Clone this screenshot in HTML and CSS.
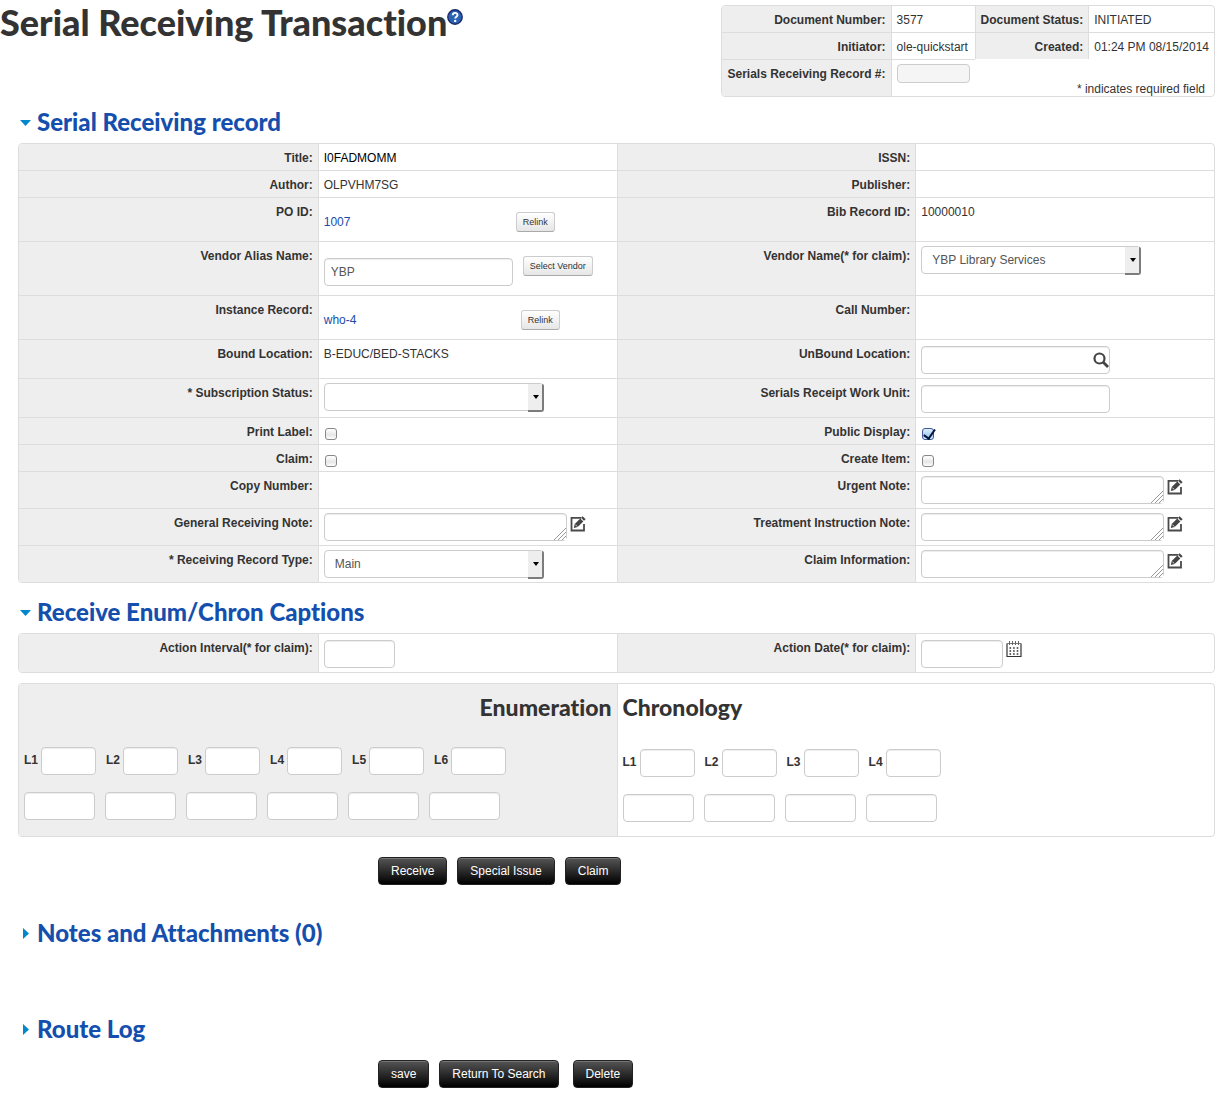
FILE: index.html
```html
<!DOCTYPE html>
<html lang="en">

<head>
    <meta charset="UTF-8">
    <meta name="viewport" content="width=device-width, initial-scale=1.0">
    <title>Serial Receiving Transaction</title>
    <link rel="stylesheet" href="styles.css">
</head>

<body>
    <!-- shared icons -->
    <svg class="icon-defs" aria-hidden="true">
        <symbol id="icon-edit" viewBox="0 0 16 16">
            <path d="M11 1.800H1.500v12.700H14V8" fill="none" stroke="#4a4a4a" stroke-width="1.800"/>
            <path d="M3.800 12l.9-3.900 5.600-5.600 3 3-5.600 5.600z" fill="#444"/>
            <path d="M11 1.800l1.600-1.600 3 3-1.600 1.600z" fill="#444"/>
            <path d="M5.300 8.600l2 2" stroke="#fff" stroke-width="0.800"/>
        </symbol>
        <symbol id="icon-down" viewBox="0 0 11 11">
            <path d="M0 3h11l-5.500 6z" fill="#08c"/>
        </symbol>
        <symbol id="icon-right" viewBox="0 0 11 11">
            <path d="M3 0v11l6-5.500z" fill="#08c"/>
        </symbol>
    </svg>

    <header class="page-header">
        <h1 class="page-title">Serial Receiving Transaction<a class="help" href="#" aria-label="Help"><svg width="16" height="16" viewBox="0 0 16 16">
            <circle cx="8" cy="8" r="7.200" fill="#2a62b4" stroke="#1c2a6b" stroke-width="1.400"/>
            <path d="M5.700 6.300c0-3.200 4.800-3.100 4.800-.3 0 1.700-2.300 1.700-2.300 3.500" fill="none" stroke="#fff" stroke-width="1.900"/>
            <circle cx="8.200" cy="11.900" r="1.200" fill="#fff"/>
        </svg></a></h1>
        <table class="grid doc-info">
            <tr>
                <th>Document Number:</th>
                <td>3577</td>
                <th>Document Status:</th>
                <td>INITIATED</td>
            </tr>
            <tr>
                <th>Initiator:</th>
                <td>ole-quickstart</td>
                <th>Created:</th>
                <td>01:24 PM 08/15/2014</td>
            </tr>
            <tr>
                <th><label for="record-no">Serials Receiving Record #:</label></th>
                <td><input class="record-no" id="record-no" type="text" disabled></td>
                <td class="required-note" colspan="2">* indicates required field</td>
            </tr>
        </table>
    </header>

    <main class="content">
        <section class="section">
            <h2 class="section-title"><a href="#"><svg width="11" height="11"><use href="#icon-down"/></svg>Serial Receiving record</a></h2>
            <table class="grid form-grid">
                <tr>
                    <th>Title:</th>
                    <td class="record-title">I0FADMOMM</td>
                    <th>ISSN:</th>
                    <td></td>
                </tr>
                <tr>
                    <th>Author:</th>
                    <td>OLPVHM7SG</td>
                    <th>Publisher:</th>
                    <td></td>
                </tr>
                <tr>
                    <th>PO ID:</th>
                    <td>
                        <div class="action-row">
                            <a class="po-link" href="#">1007</a>
                            <button class="btn-small" type="button">Relink</button>
                        </div>
                    </td>
                    <th>Bib Record ID:</th>
                    <td>10000010</td>
                </tr>
                <tr>
                    <th><label for="vendor-alias">Vendor Alias Name:</label></th>
                    <td>
                        <div class="action-row vendor-row">
                            <input class="text-box medium" id="vendor-alias" type="text" value="YBP">
                            <button class="btn-small" type="button">Select Vendor</button>
                        </div>
                    </td>
                    <th><label for="vendor-name">Vendor Name(* for claim):</label></th>
                    <td><span class="select-box"><select id="vendor-name"><option>YBP Library Services</option></select></span></td>
                </tr>
                <tr>
                    <th>Instance Record:</th>
                    <td>
                        <div class="action-row">
                            <a class="instance-link" href="#">who-4</a>
                            <button class="btn-small" type="button">Relink</button>
                        </div>
                    </td>
                    <th>Call Number:</th>
                    <td></td>
                </tr>
                <tr>
                    <th>Bound Location:</th>
                    <td>B-EDUC/BED-STACKS</td>
                    <th><label for="unbound">UnBound Location:</label></th>
                    <td>
                        <div class="search-box">
                            <input class="text-box medium" id="unbound" type="text">
                            <button class="search-btn icon-btn" type="button" aria-label="Search"><svg width="16" height="16" viewBox="0 0 16 16">
                                <circle cx="6.500" cy="6.500" r="5" fill="none" stroke="#444" stroke-width="2.200"/>
                                <path d="M10 10l5 5" stroke="#444" stroke-width="2.800"/>
                            </svg></button>
                        </div>
                    </td>
                </tr>
                <tr>
                    <th><label for="status">* Subscription Status:</label></th>
                    <td><span class="select-box"><select id="status"><option></option></select></span></td>
                    <th><label for="work-unit">Serials Receipt Work Unit:</label></th>
                    <td><input class="text-box medium" id="work-unit" type="text"></td>
                </tr>
                <tr>
                    <th><label for="print-label">Print Label:</label></th>
                    <td><input class="check" id="print-label" type="checkbox"></td>
                    <th><label for="public-display">Public Display:</label></th>
                    <td><input class="check" id="public-display" type="checkbox" checked></td>
                </tr>
                <tr>
                    <th><label for="claim">Claim:</label></th>
                    <td><input class="check" id="claim" type="checkbox"></td>
                    <th><label for="create-item">Create Item:</label></th>
                    <td><input class="check" id="create-item" type="checkbox"></td>
                </tr>
                <tr>
                    <th>Copy Number:</th>
                    <td></td>
                    <th><label for="urgent-note">Urgent Note:</label></th>
                    <td>
                        <div class="note-row">
                            <textarea id="urgent-note"></textarea>
                            <button class="icon-btn" type="button" aria-label="Edit urgent note"><svg width="16" height="16"><use href="#icon-edit"/></svg></button>
                        </div>
                    </td>
                </tr>
                <tr>
                    <th><label for="general-note">General Receiving Note:</label></th>
                    <td>
                        <div class="note-row">
                            <textarea id="general-note"></textarea>
                            <button class="icon-btn" type="button" aria-label="Edit general receiving note"><svg width="16" height="16"><use href="#icon-edit"/></svg></button>
                        </div>
                    </td>
                    <th><label for="treatment-note">Treatment Instruction Note:</label></th>
                    <td>
                        <div class="note-row">
                            <textarea id="treatment-note"></textarea>
                            <button class="icon-btn" type="button" aria-label="Edit treatment note"><svg width="16" height="16"><use href="#icon-edit"/></svg></button>
                        </div>
                    </td>
                </tr>
                <tr>
                    <th><label for="record-type">* Receiving Record Type:</label></th>
                    <td><span class="select-box"><select id="record-type"><option>Main</option></select></span></td>
                    <th><label for="claim-info">Claim Information:</label></th>
                    <td>
                        <div class="note-row">
                            <textarea id="claim-info"></textarea>
                            <button class="icon-btn" type="button" aria-label="Edit claim information"><svg width="16" height="16"><use href="#icon-edit"/></svg></button>
                        </div>
                    </td>
                </tr>
            </table>
        </section>

        <section class="section">
            <h2 class="section-title"><a href="#"><svg width="11" height="11"><use href="#icon-down"/></svg>Receive Enum/Chron Captions</a></h2>
            <table class="grid form-grid">
                <tr>
                    <th><label for="interval">Action Interval(* for claim):</label></th>
                    <td><input class="text-box small" id="interval" type="text"></td>
                    <th><label for="action-date">Action Date(* for claim):</label></th>
                    <td>
                        <div class="note-row">
                            <input class="text-box date" id="action-date" type="text">
                            <button class="icon-btn" type="button" aria-label="Pick a date"><svg width="16" height="16" viewBox="0 0 16 16">
                                <path d="M1 2.500V15.500H15V2.500" fill="none" stroke="#333" stroke-width="1.200"/>
                                <path d="M1 2.500h14" stroke="#777" stroke-width="1"/>
                                <path d="M3.500 0v4M6.500 0v4M9.500 0v4M12.500 0v4" stroke="#666" stroke-width="1"/>
                                <path d="M3.500 7h10M3.500 10h10M3.500 13h10" stroke="#333" stroke-width="1.600" stroke-dasharray="1.600 2"/>
                            </svg></button>
                        </div>
                    </td>
                </tr>
            </table>

            <div class="captions">
                <div class="enumeration">
                    <h3>Enumeration</h3>
                    <div class="levels">
                        <label>L1<input class="text-box level" type="text"></label>
                        <label>L2<input class="text-box level" type="text"></label>
                        <label>L3<input class="text-box level" type="text"></label>
                        <label>L4<input class="text-box level" type="text"></label>
                        <label>L5<input class="text-box level" type="text"></label>
                        <label>L6<input class="text-box level" type="text"></label>
                    </div>
                    <div class="levels">
                        <input class="text-box small" type="text" aria-label="L1 value">
                        <input class="text-box small" type="text" aria-label="L2 value">
                        <input class="text-box small" type="text" aria-label="L3 value">
                        <input class="text-box small" type="text" aria-label="L4 value">
                        <input class="text-box small" type="text" aria-label="L5 value">
                        <input class="text-box small" type="text" aria-label="L6 value">
                    </div>
                </div>
                <div class="chronology">
                    <h3>Chronology</h3>
                    <div class="levels">
                        <label>L1<input class="text-box level" type="text"></label>
                        <label>L2<input class="text-box level" type="text"></label>
                        <label>L3<input class="text-box level" type="text"></label>
                        <label>L4<input class="text-box level" type="text"></label>
                    </div>
                    <div class="levels">
                        <input class="text-box small" type="text" aria-label="L1 value">
                        <input class="text-box small" type="text" aria-label="L2 value">
                        <input class="text-box small" type="text" aria-label="L3 value">
                        <input class="text-box small" type="text" aria-label="L4 value">
                    </div>
                </div>
            </div>

            <div class="buttons">
                <button class="btn" type="button">Receive</button>
                <button class="btn" type="button">Special Issue</button>
                <button class="btn" type="button">Claim</button>
            </div>
        </section>

        <section class="section closed">
            <h2 class="section-title"><a href="#"><svg width="11" height="11"><use href="#icon-right"/></svg>Notes and Attachments (0)</a></h2>
        </section>

        <section class="section closed">
            <h2 class="section-title"><a href="#"><svg width="11" height="11"><use href="#icon-right"/></svg>Route Log</a></h2>
        </section>

        <div class="buttons">
            <button class="btn" type="button">save</button>
            <button class="btn" type="button">Return To Search</button>
            <button class="btn btn-delete" type="button">Delete</button>
        </div>
    </main>
</body>

</html>
```
FILE: styles.css
```css
* {
    box-sizing: border-box;
}

body {
    margin: 0;
    font-family: "Liberation Sans", Arial, sans-serif;
    font-size: 12px;
    line-height: 20px;
    color: #333;
    background-color: #fff;
}

a {
    color: #1a4bab;
    text-decoration: none;
}

h1, h2, h3 {
    font-family: Lato, sans-serif;
    font-variant-ligatures: none;
}

input, select, textarea, button {
    font-family: inherit;
    font-size: 12px;
    margin: 0;
}

svg {
    display: block;
}

.icon-defs {
    display: none;
}

/* header */
.page-header {
    display: flex;
    justify-content: space-between;
    align-items: flex-start;
    padding: 5px 2px 0 0;
    margin-bottom: 13px;
}

.page-title {
    display: flex;
    align-items: flex-start;
    margin: 0;
    font-size: 36px;
    font-weight: 900;
    line-height: 34px;
}

.help {
    padding-top: 4px;
}

/* bordered tables */
.grid {
    border: 1px solid #ddd;
    border-radius: 4px;
    border-collapse: separate;
    border-spacing: 0;
    overflow: hidden;
}

.grid th, .grid td {
    padding: 4px 5px 2px;
    border-left: 1px solid #ddd;
    border-top: 1px solid #ddd;
    vertical-align: top;
    text-align: left;
}

.grid th {
    background-color: #eee;
    text-align: right;
}

.grid td > * {
    margin-bottom: 2px;
}

.grid tr:first-child th, .grid tr:first-child td {
    border-top: none;
}

.grid th:first-child {
    border-left: none;
}

.form-grid {
    width: 100%;
    table-layout: fixed;
}

.doc-info {
    white-space: nowrap;
}

.doc-info .required-note {
    padding: 0 9px 0 0;
    border: none;
    text-align: right;
    vertical-align: bottom;
    line-height: 14px;
}

.doc-info .record-no {
    display: block;
    width: 73px;
    height: 19px;
    margin-bottom: 11px;
    border: 1px solid #ccc;
    border-radius: 4px;
    background-color: #f5f5f5;
}

.record-title {
    color: #000;
}

/* sections */
.content {
    padding: 0 2px 5px 18px;
}

.section {
    margin-bottom: 17px;
}

.closed {
    margin-bottom: 19px;
}

.closed + .closed {
    margin-top: 72px;
}

.section-title {
    margin: 0 0 9px;
    padding-left: 2px;
    font-size: 24px;
    font-weight: 900;
    line-height: 24px;
}

.closed .section-title {
    margin-bottom: 0;
}

.section-title a {
    display: flex;
    align-items: center;
    gap: 6px;
    color: #144fae;
}

/* form controls */
.text-box {
    display: block;
    height: 28px;
    margin-top: 2px;
    padding: 4px 6px;
    border: 1px solid #ccc;
    border-radius: 4px;
    background-color: #fff;
    box-shadow: inset 0 1px 1px rgba(0, 0, 0, 0.075);
    color: #555;
}

.medium {
    width: 189px;
}

.small {
    width: 71px;
}

.date {
    width: 82px;
}

.level {
    width: 55px;
}

.check {
    appearance: none;
    display: block;
    position: relative;
    width: 12px;
    height: 12px;
    margin: 6px 1px 0;
    border: 1px solid #888;
    border-radius: 3px;
    background: linear-gradient(#fff, #e6e6e6 60%, #fff);
}

.check:checked {
    border-color: #3c5a9a;
    background: linear-gradient(#e2effc, #a9d0f5 60%, #d0f0ff);
}

.check:checked::after {
    content: "";
    position: absolute;
    left: 3px;
    top: -2px;
    width: 5px;
    height: 10px;
    border: solid #06163a;
    border-width: 0 2px 2px 0;
    transform: rotate(35deg);
}

.select-box {
    display: block;
    position: relative;
    width: 220px;
    height: 28px;
}

.select-box select {
    appearance: none;
    width: 100%;
    height: 28px;
    padding: 4px 10px;
    border: 1px solid #ccc;
    border-radius: 4px;
    background-color: #fff;
    color: #555;
}

/* raised drop-down handle */
.select-box::before {
    content: "";
    position: absolute;
    right: 0;
    top: 1px;
    width: 14px;
    height: 26px;
    border: solid #7c7c7c;
    border-width: 0 2px 2px 0;
    border-radius: 0 2px 3px 0;
    background-color: #eee;
    pointer-events: none;
}

.select-box::after {
    content: "";
    position: absolute;
    right: 5px;
    top: 12px;
    border: solid transparent;
    border-width: 4px 3px 0;
    border-top-color: #000;
    pointer-events: none;
}

textarea {
    display: block;
    width: 243px;
    height: 28px;
    padding: 4px 6px;
    border: 1px solid #ccc;
    border-radius: 4px;
    box-shadow: inset 0 1px 1px rgba(0, 0, 0, 0.075);
    overflow: hidden;
    color: #555;
}

/* diagonal grip in the corner */
textarea::-webkit-resizer {
    background:
        linear-gradient(135deg, #fff 58%, transparent 58%),
        repeating-linear-gradient(135deg, #999 0, #999 1px, #fff 1px, #fff 3px);
}

.action-row {
    display: flex;
    align-items: center;
    padding: 10px 0 5px;
}

.vendor-row {
    align-items: flex-start;
    gap: 10px;
}

.po-link {
    width: 192px;
}

.instance-link {
    width: 197px;
}

.note-row {
    display: flex;
    align-items: flex-start;
    gap: 3px;
}

.note-row .icon-btn {
    margin-top: 3px;
}

.icon-btn {
    padding: 0;
    border: none;
    background: none;
    cursor: pointer;
}

.search-box {
    position: relative;
    width: 189px;
}

.search-btn {
    position: absolute;
    right: 1px;
    top: 6px;
}

.btn-small {
    height: 20px;
    padding: 0 6px;
    border: 1px solid #ccc;
    border-bottom-color: #aaa;
    border-radius: 3px;
    background: linear-gradient(#fff, #e6e6e6);
    font-size: 9px;
    color: #333;
    cursor: pointer;
}

/* enumeration and chronology */
.captions {
    display: grid;
    grid-template-columns: 1fr 1fr;
    margin-top: 10px;
    border: 1px solid #ddd;
    border-radius: 4px;
    overflow: hidden;
}

.enumeration, .chronology {
    padding: 4px 5px 14px;
}

.enumeration {
    background-color: #eee;
}

.chronology {
    border-left: 1px solid #ddd;
}

.captions h3 {
    margin: 0 0 21px;
    font-size: 23px;
    font-weight: 900;
    line-height: 38px;
}

.captions .enumeration h3 {
    margin-bottom: 19px;
    text-align: right;
}

.levels {
    display: flex;
    gap: 10px;
}

.levels + .levels {
    margin-top: 15px;
}

.levels label {
    display: flex;
    align-items: center;
    gap: 3px;
    font-weight: 700;
}

/* black buttons */
.buttons {
    display: flex;
    gap: 10px;
    padding-left: 360px;
}

.captions + .buttons {
    margin: 20px 0 36px;
}

.btn {
    height: 28px;
    padding: 0 12px;
    border: 1px solid #222;
    border-radius: 4px;
    background: linear-gradient(#555, #000);
    box-shadow: inset 0 1px 0 rgba(255, 255, 255, 0.2);
    color: #fff;
    cursor: pointer;
}

.btn-delete {
    margin-left: 4px;
}
```
